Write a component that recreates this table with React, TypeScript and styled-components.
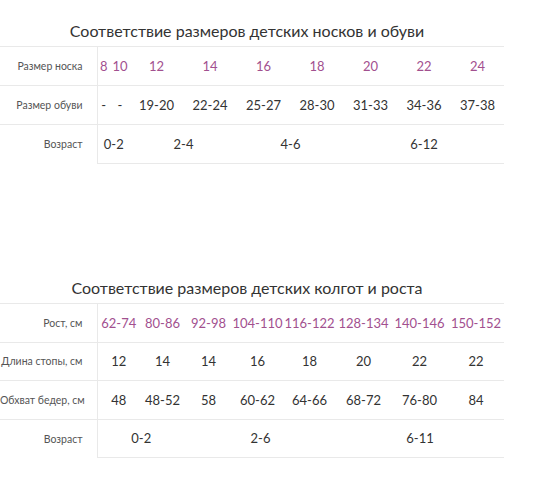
import React from "react";
import styled, { createGlobalStyle } from "styled-components";

const Global = createGlobalStyle`
  html, body { margin: 0; padding: 0; background: #fff; }
  body { font-family: Lato, "Noto Sans", sans-serif; color: #333; }
`;

const Page = styled.div`
  width: 542px;
  height: 480px;
  display: flex;
  flex-direction: column;
`;

const Section = styled.section<{ $top: number }>`
  width: 504px;
  padding-top: ${(p) => p.$top}px;
`;

const Title = styled.h2`
  margin: 0;
  height: 30px;
  padding-right: 10px;
  text-align: center;
  font-size: 16px;
  font-weight: 400;
  line-height: 30px;
  color: #333;
`;

const Table = styled.table`
  width: 504px;
  border-collapse: collapse;
  table-layout: fixed;
  border-top: 1px solid #e9e9e9;
`;

const Label = styled.th<{ $last?: boolean; $h: number }>`
  height: ${(p) => p.$h}px;
  padding: 0 14px 0 0;
  text-align: right;
  font-size: 10.5px;
  font-weight: 400;
  color: #555;
  border-right: 1px solid #e9e9e9;
  border-bottom: ${(p) => (p.$last ? "none" : "1px solid #e9e9e9")};
  white-space: nowrap;
`;

const Cell = styled.td<{ $accent?: boolean; $h: number }>`
  height: ${(p) => p.$h}px;
  padding: 0;
  text-align: center;
  font-size: 13px;
  color: ${(p) => (p.$accent ? "#a2508f" : "#333")};
  border-bottom: 1px solid #e9e9e9;
  white-space: nowrap;
`;

type Row = { label: string; accent?: boolean; cells: { v: string; span?: number }[] };

const SizeTable: React.FC<{ widths: number[]; rows: Row[]; h: number }> = ({ widths, rows, h }) => (
  <Table>
    <colgroup>
      {widths.map((w, i) => (
        <col key={i} style={{ width: w }} />
      ))}
    </colgroup>
    <tbody>
      {rows.map((r, ri) => (
        <tr key={ri}>
          <Label $h={h} $last={ri === rows.length - 1}>{r.label}</Label>
          {r.cells.map((c, ci) => (
            <Cell key={ci} $h={h} colSpan={c.span} $accent={r.accent}>
              {c.v}
            </Cell>
          ))}
        </tr>
      ))}
    </tbody>
  </Table>
);

const socks: Row[] = [
  { label: "Размер носка", accent: true, cells: ["8", "10", "12", "14", "16", "18", "20", "22", "24"].map((v) => ({ v })) },
  { label: "Размер обуви", cells: ["-", "-", "19-20", "22-24", "25-27", "28-30", "31-33", "34-36", "37-38"].map((v) => ({ v })) },
  {
    label: "Возраст",
    cells: [
      { v: "0-2", span: 2 },
      { v: "2-4", span: 2 },
      { v: "4-6", span: 2 },
      { v: "6-12", span: 3 },
    ],
  },
];

const tights: Row[] = [
  { label: "Рост, см", accent: true, cells: ["62-74", "80-86", "92-98", "104-110", "116-122", "128-134", "140-146", "150-152"].map((v) => ({ v })) },
  { label: "Длина стопы, см", cells: ["12", "14", "14", "16", "18", "20", "22", "22"].map((v) => ({ v })) },
  { label: "Обхват бедер, см", cells: ["48", "48-52", "58", "60-62", "64-66", "68-72", "76-80", "84"].map((v) => ({ v })) },
  {
    label: "Возраст",
    cells: [
      { v: "0-2", span: 2 },
      { v: "2-6", span: 3 },
      { v: "6-11", span: 3 },
    ],
  },
];

export default function App() {
  return (
    <Page>
      <Global />
      <Section $top={16}>
        <Title>Соответствие размеров детских носков и обуви</Title>
        <SizeTable h={38} widths={[97, 13, 20, 53, 54, 53, 54, 53, 54, 53]} rows={socks} />
      </Section>
      <Section $top={109}>
        <Title>Соответствие размеров детских колгот и роста</Title>
        <SizeTable h={37.5} widths={[97, 43, 45, 47, 51, 53, 55, 57, 56]} rows={tights} />
      </Section>
    </Page>
  );
}
